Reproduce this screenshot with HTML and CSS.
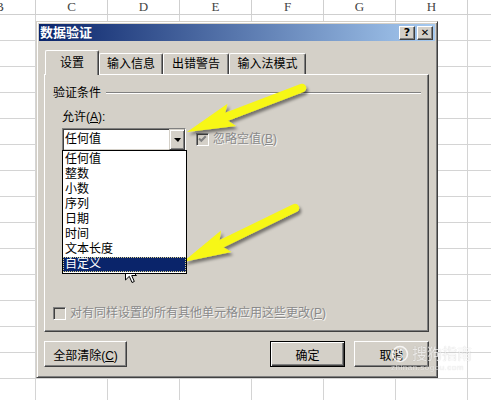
FILE: index.html
```html
<!DOCTYPE html>
<html lang="zh-CN">
<head>
    <meta charset="UTF-8">
    <title>数据验证</title>
    <link rel="stylesheet" href="styles.css">
</head>
<body>
    <div class="sheet">
        <div class="col-heads">
            <div class="col-head">B</div>
            <div class="col-head">C</div>
            <div class="col-head">D</div>
            <div class="col-head">E</div>
            <div class="col-head">F</div>
            <div class="col-head">G</div>
            <div class="col-head">H</div>
            <div class="col-head"></div>
        </div>
        <div class="cells"></div>
    </div>

    <div class="dialog">
        <div class="title-bar">
            <span class="title">数据验证</span>
            <span class="cap-btn">?</span>
            <span class="cap-btn cap-close">&#x2715;</span>
        </div>
        <div class="dialog-body">
            <div class="tabs">
                <div class="tab active" style="width:54px">设置</div>
                <div class="tab" style="width:64px">输入信息</div>
                <div class="tab" style="width:66px">出错警告</div>
                <div class="tab" style="width:77px">输入法模式</div>
            </div>
            <div class="tab-panel">
                <div class="group-title">
                    <span>验证条件</span>
                    <span class="group-line"></span>
                </div>
                <div class="field-label">允许(<u>A</u>):</div>
                <div class="combo-row">
                    <div class="combo">
                        <span class="combo-text">任何值</span>
                        <span class="combo-btn"><i class="arrow-down"></i></span>
                        <ul class="drop-list">
                            <li>任何值</li>
                            <li>整数</li>
                            <li>小数</li>
                            <li>序列</li>
                            <li>日期</li>
                            <li>时间</li>
                            <li>文本长度</li>
                            <li class="selected">自定义</li>
                        </ul>
                    </div>
                    <span class="check">
                        <svg width="11" height="11" viewBox="0 0 11 11"><path d="M2 4.5 L4.3 6.8 L8.8 2.3" fill="none" stroke="#808080" stroke-width="2"/></svg>
                    </span>
                    <span class="disabled-text">忽略空值(<u>B</u>)</span>
                </div>
                <div class="apply-row">
                    <span class="check"></span>
                    <span class="disabled-text">对有同样设置的所有其他单元格应用这些更改(<u>P</u>)</span>
                </div>
            </div>
            <div class="buttons">
                <button class="btn" style="width:83px">全部清除(<u>C</u>)</button>
                <button class="btn btn-default">确定</button>
                <button class="btn">取消</button>
            </div>
        </div>
    </div>

    <!-- 提示箭头 -->
    <svg class="arrows" width="491" height="400" viewBox="0 0 491 400">
        <defs>
            <filter id="shade" x="-20%" y="-20%" width="140%" height="140%">
                <feDropShadow dx="2" dy="3" stdDeviation="1.6" flood-color="#000" flood-opacity="0.45"/>
            </filter>
        </defs>
        <g filter="url(#shade)" fill="#f7f716">
            <line x1="302" y1="88" x2="226" y2="117" stroke="#f7f716" stroke-width="8.5" stroke-linecap="round"/>
            <polygon points="187,132 236,126 224,118 227.5,103.7"/>
            <line x1="295" y1="208" x2="221" y2="244" stroke="#f7f716" stroke-width="8.5" stroke-linecap="round"/>
            <polygon points="183,262 231.4,252 219,244.6 221,230.4"/>
        </g>
    </svg>

    <svg class="cursor" width="13" height="20" viewBox="0 0 13 20">
        <path d="M0.5 0.5 L0.5 16 L4.3 12.3 L7 18.5 L9.3 17.5 L6.7 11.5 L11.5 11.5 Z" fill="#fff" stroke="#000" stroke-width="1"/>
    </svg>

    <div class="watermark">
        <div class="wm-top">
            <svg width="18" height="18" viewBox="0 0 18 18"><circle cx="9" cy="9" r="7.5" fill="none" stroke="#fff" stroke-width="1.6"/><path d="M12 5.5 C9 4 6 5.5 7 8 C8 10 12 9 11 12 C10 14 7 13.5 5.5 12.5" fill="none" stroke="#fff" stroke-width="1.6"/></svg>
            <span>搜狗指南</span>
        </div>
        <div class="wm-url">zhinan.sogou.com</div>
    </div>
</body>
</html>
```

FILE: styles.css
```css
* {
    box-sizing: border-box;
}
body {
    margin: 0;
    width: 491px;
    height: 400px;
    overflow: hidden;
    position: relative;
    background: #ffffff;
    font-family: "Liberation Sans", "Noto Sans CJK SC", sans-serif;
    font-size: 12px;
    color: #000000;
}
u {
    text-decoration: underline;
}

/* 表格背景 */
.sheet {
    margin-left: -36px;
    width: 576px;
}
.col-heads {
    display: grid;
    grid-template-columns: repeat(8, 72px);
}
.col-head {
    height: 15px;
    border-right: 1px solid #cfcfcf;
    border-bottom: 1px solid #cfcfcf;
    text-align: center;
    font-family: "Liberation Serif", serif;
    font-size: 13px;
    line-height: 14px;
    color: #444444;
}
.cells {
    height: 385px;
    background-image:
        linear-gradient(to right, transparent 71px, #d4d4d4 71px),
        linear-gradient(to bottom, transparent 25px, #d4d4d4 25px);
    background-size: 72px 26px;
}

/* 对话框 */
.dialog {
    position: absolute;
    left: 36px;
    top: 21px;
    width: 402px;
    height: 357px;
    padding: 2px;
    display: flex;
    flex-direction: column;
    background: #d4d0c8;
    border: 1px solid;
    border-color: #d4d0c8 #404040 #404040 #d4d0c8;
    box-shadow: inset 1px 1px #ffffff, inset -1px -1px #808080;
}
.title-bar {
    height: 17px;
    display: flex;
    align-items: center;
    padding: 0 2px 0 1px;
    background: linear-gradient(to right, #0a246a, #a6caf0);
}
.title {
    flex: 1;
    color: #ffffff;
    font-weight: bold;
    font-size: 13px;
    line-height: 17px;
}
.cap-btn {
    width: 16px;
    height: 14px;
    margin-left: 2px;
    background: #d4d0c8;
    border: 1px solid;
    border-color: #ffffff #404040 #404040 #ffffff;
    box-shadow: inset -1px -1px #808080;
    font-family: "DejaVu Sans", sans-serif;
    font-weight: bold;
    font-size: 11px;
    line-height: 12px;
    text-align: center;
}
.cap-close {
    font-size: 10px;
}
.dialog-body {
    flex: 1;
    padding: 9px 6px 0 5px;
}

/* 选项卡 */
.tabs {
    height: 24px;
    display: flex;
    align-items: flex-end;
    padding-left: 1px;
}
.tab {
    height: 21px;
    text-align: center;
    line-height: 20px;
    border: 1px solid;
    border-color: #ffffff #404040 transparent #ffffff;
    border-bottom: 0;
    border-radius: 2px 2px 0 0;
    box-shadow: inset -1px 0 #808080;
}
.tab.active {
    height: 25px;
    margin-bottom: -1px;
    line-height: 24px;
    position: relative;
    z-index: 1;
    background: #d4d0c8;
}
.tab-panel {
    height: 258px;
    display: flex;
    flex-direction: column;
    padding: 11px 7px 11px 8px;
    border: 1px solid;
    border-color: #ffffff #404040 #404040 #ffffff;
    box-shadow: inset -1px -1px #808080;
}
.group-title {
    display: flex;
    align-items: center;
    height: 14px;
    line-height: 14px;
}
.group-line {
    flex: 1;
    margin-left: 5px;
    border-top: 1px solid #808080;
    border-bottom: 1px solid #ffffff;
}
.field-label {
    margin: 10px 0 0 9px;
    line-height: 14px;
}
.combo-row {
    display: flex;
    align-items: center;
    margin: 4px 0 0 9px;
}
.combo {
    position: relative;
    width: 124px;
    height: 23px;
    display: flex;
    background: #ffffff;
    border: 1px solid;
    border-color: #808080 #ffffff #ffffff #808080;
    box-shadow: inset 1px 1px #404040, inset -1px -1px #d4d0c8;
}
.combo-text {
    flex: 1;
    padding-left: 2px;
    line-height: 21px;
}
.combo-btn {
    width: 16px;
    height: 21px;
    display: flex;
    align-items: center;
    justify-content: center;
    background: #d4d0c8;
    border: 1px solid;
    border-color: #d4d0c8 #404040 #404040 #d4d0c8;
    box-shadow: inset 1px 1px #ffffff, inset -1px -1px #808080;
}
.arrow-down {
    width: 0;
    height: 0;
    margin-top: 1px;
    border-left: 4px solid transparent;
    border-right: 3px solid transparent;
    border-top: 4px solid #000000;
}
.drop-list {
    position: absolute;
    left: -1px;
    top: 21px;
    z-index: 2;
    width: 125px;
    margin: 0;
    padding: 1px 0;
    list-style: none;
    background: #ffffff;
    border: 1px solid #000000;
}
.drop-list li {
    height: 15px;
    padding-left: 2px;
    line-height: 15px;
}
.drop-list li.selected {
    background: #0a246a;
    color: #ffffff;
    outline: 1px dotted #d8cf8a;
    outline-offset: -1px;
}
.check {
    width: 13px;
    height: 13px;
    display: flex;
    align-items: center;
    justify-content: center;
    background: #d4d0c8;
    border: 1px solid;
    border-color: #808080 #ffffff #ffffff #808080;
    box-shadow: inset 1px 1px #404040, inset -1px -1px #d4d0c8;
}
.combo-row .check {
    margin-left: 10px;
}
.disabled-text {
    margin-left: 4px;
    color: #8a8a8a;
    text-shadow: 1px 1px #f4f4f4;
    line-height: 13px;
}
.apply-row {
    margin-top: auto;
    display: flex;
    align-items: center;
    height: 13px;
}

/* 按钮 */
.buttons {
    display: flex;
    margin-top: 9px;
}
.btn {
    width: 75px;
    height: 26px;
    padding: 0;
    font: inherit;
    color: #000000;
    background: #d4d0c8;
    border: 1px solid;
    border-color: #ffffff #404040 #404040 #ffffff;
    box-shadow: inset -1px -1px #808080;
}
.btn-default {
    margin-left: auto;
    margin-right: 9px;
    border-color: #000000;
    box-shadow: inset 1px 1px #ffffff, inset -1px -1px #404040, inset -2px -2px #808080;
}

/* 覆盖层 */
.arrows {
    position: absolute;
    left: 0;
    top: 0;
    pointer-events: none;
}
.cursor {
    position: absolute;
    left: 125px;
    top: 264px;
}
.watermark {
    position: absolute;
    left: 391px;
    top: 345px;
    color: rgba(255, 255, 255, 0.85);
    text-shadow: 0 0 1px rgba(0, 0, 0, 0.3);
    opacity: 0.8;
}
.wm-top {
    display: flex;
    align-items: center;
    gap: 3px;
    font-size: 15px;
    line-height: 18px;
}
.wm-url {
    font-size: 8px;
    line-height: 9px;
    letter-spacing: 0.5px;
}
```
